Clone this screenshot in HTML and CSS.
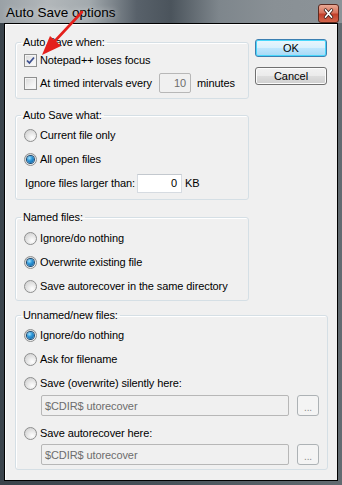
FILE: index.html
```html
<!DOCTYPE html>
<html lang="en">
<head>
    <meta charset="UTF-8">
    <title>Auto Save options</title>
    <link rel="stylesheet" href="styles.css">
</head>
<body>
    <div class="window">
        <div class="titlebar">
            <span class="title">Auto Save options</span>
            <span class="close">
                <svg width="19" height="17" viewBox="0 0 19 17">
                    <path d="M6.5 5 L12.5 12 M12.5 5 L6.5 12" stroke="#3a1d16" stroke-width="3.4" stroke-linecap="round"/>
                    <path d="M6.5 5 L12.5 12 M12.5 5 L6.5 12" stroke="#fff" stroke-width="1.8" stroke-linecap="round"/>
                </svg>
            </span>
        </div>

        <div class="client">
            <div class="top">
                <div class="groups">
                    <fieldset class="group g-when">
                        <legend>Auto Save when:</legend>
                        <div class="row">
                            <span class="check on">
                                <svg width="11" height="11" viewBox="0 0 11 11"><path d="M2 5.5 L4.4 8 L9 2.5" fill="none" stroke="#3c4f8f" stroke-width="1.8"/></svg>
                            </span>
                            <span>Notepad++ loses focus</span>
                        </div>
                        <div class="row">
                            <span class="check"></span>
                            <span class="label-every">At timed intervals every</span>
                            <span class="edit disabled num every-box">10</span>
                            <span class="unit">minutes</span>
                        </div>
                    </fieldset>

                    <fieldset class="group g-what">
                        <legend>Auto Save what:</legend>
                        <div class="row"><span class="radio"></span><span>Current file only</span></div>
                        <div class="row"><span class="radio on"></span><span>All open files</span></div>
                        <div class="row plain">
                            <span class="label-size">Ignore files larger than:</span>
                            <span class="edit num size-box">0</span>
                            <span class="unit">KB</span>
                        </div>
                    </fieldset>

                    <fieldset class="group g-named">
                        <legend>Named files:</legend>
                        <div class="row"><span class="radio"></span><span>Ignore/do nothing</span></div>
                        <div class="row"><span class="radio on"></span><span>Overwrite existing file</span></div>
                        <div class="row"><span class="radio"></span><span>Save autorecover in the same directory</span></div>
                    </fieldset>
                </div>

                <div class="buttons">
                    <button class="btn default">OK</button>
                    <button class="btn">Cancel</button>
                </div>
            </div>

            <fieldset class="group g-unnamed">
                <legend>Unnamed/new files:</legend>
                <div class="row"><span class="radio on"></span><span>Ignore/do nothing</span></div>
                <div class="row"><span class="radio"></span><span>Ask for filename</span></div>
                <div class="row"><span class="radio"></span><span>Save (overwrite) silently here:</span></div>
                <div class="path-row first">
                    <span class="edit disabled path">$CDIR$ utorecover</span>
                    <span class="browse">...</span>
                </div>
                <div class="row after-path"><span class="radio"></span><span>Save autorecover here:</span></div>
                <div class="path-row last">
                    <span class="edit disabled path">$CDIR$ utorecover</span>
                    <span class="browse">...</span>
                </div>
            </fieldset>
        </div>

        <!-- annotation arrow drawn over the dialog -->
        <svg class="arrow" width="90" height="60" viewBox="0 0 90 60">
            <path d="M82 12 L54 42" stroke="#e4201c" stroke-width="2.6" stroke-linecap="round"/>
            <path d="M42 55 L50 36 L61 46 Z" fill="#e4201c"/>
        </svg>
    </div>
</body>
</html>
```

FILE: styles.css
```css
body {
    margin: 0;
    width: 342px;
    height: 485px;
    overflow: hidden;
    font-family: "Liberation Sans", Arial, sans-serif;
    font-size: 11px;
    letter-spacing: -0.1px;
    color: #000;
}
.window {
    position: relative;
    width: 342px;
    height: 485px;
    display: flex;
    flex-direction: column;
    background: linear-gradient(90deg, #3a434b 0%, #48525a 50%, #626b71 100%);
}
.titlebar {
    height: 23px;
    display: flex;
    align-items: center;
    padding: 0 3px 0 6px;
    background: linear-gradient(90deg, #9aa1a6 0%, #b2b7ba 14%, #a3aaae 26%, #58616a 40%, #4b545c 50%, #7e868c 64%, #899095 80%, #8c9398 100%);
}
.title {
    flex: 1;
    font-size: 13.5px;
    letter-spacing: 0;
    padding-top: 2px;
    text-shadow: 0 0 6px rgba(255, 255, 255, 0.6);
}
.close {
    width: 19px;
    height: 17px;
    margin-top: 3px;
    border: 1px solid #5b2a20;
    border-radius: 3px;
    background: linear-gradient(180deg, #e9a995 0%, #d8735c 45%, #c2402a 55%, #d3654b 100%);
    display: flex;
}
.client {
    flex: 1;
    margin: 0 4px 4px 4px;
    border: 1px solid #000;
    box-shadow: inset 1px 1px 0 #fff;
    background: #f0f0f0;
    padding: 12px 0 0 10px;
}
.top {
    display: flex;
    gap: 6px;
}
.groups {
    width: 234px;
    display: flex;
    flex-direction: column;
}
.group {
    margin: 0;
    padding: 0 0 0 8px;
    border: 1px solid #d5dfe5;
    border-radius: 3px;
    box-shadow: inset 1px 1px 0 #fff;
    display: flex;
    flex-direction: column;
    gap: 4px;
}
.group legend {
    font-size: 11px;
    line-height: 13px;
    margin-left: -3px;
    padding: 0 2px;
}
.g-when {
    gap: 3px;
    padding-top: 1px;
    padding-bottom: 5px;
}
.g-what {
    margin-top: 10px;
    padding-top: 3px;
    padding-bottom: 6px;
}
.g-named {
    margin-top: 11px;
    padding-top: 4px;
    padding-bottom: 4px;
}
.g-unnamed {
    width: 313px;
    box-sizing: border-box;
    margin-top: 8px;
    padding-top: 3px;
    padding-bottom: 4px;
}
.row {
    height: 20px;
    display: flex;
    align-items: center;
    white-space: nowrap;
}
.row.plain {
    padding-left: 1px;
}
.check,
.radio {
    width: 13px;
    height: 13px;
    box-sizing: border-box;
    margin-right: 3px;
    flex: none;
    display: flex;
    align-items: center;
    justify-content: center;
}
.check {
    border: 1px solid #8e8f8f;
    background: linear-gradient(135deg, #d9d9d9 0%, #f2f2f2 60%, #fdfdfd 100%);
    box-shadow: inset 0 0 0 1px #f4f4f4;
}
.radio {
    border: 1px solid #8e8f8f;
    border-radius: 50%;
    background: radial-gradient(circle at 65% 70%, #ffffff 0%, #e6e6e6 45%, #c9c9c9 100%);
}
.radio.on::after {
    content: "";
    width: 7px;
    height: 7px;
    border-radius: 50%;
    background: radial-gradient(circle at 35% 30%, #9fe2ff 0%, #2d97d9 40%, #0c5796 100%);
    box-shadow: 0 0 0 1px #1b4a72;
}
.edit {
    box-sizing: border-box;
    border: 1px solid #d6dbe1;
    border-top-color: #c3c8ce;
    background: #fff;
    display: flex;
    align-items: center;
    padding: 0 4px;
}
.edit.disabled {
    background: #f0f0f0;
    border-color: #b7b7b7;
    border-radius: 2px;
    color: #6d6d6d;
}
.num {
    justify-content: flex-end;
}
.label-every {
    width: 119px;
}
.every-box {
    width: 32px;
    height: 20px;
}
.unit {
    margin-left: 6px;
}
.label-size {
    width: 112px;
}
.size-box {
    width: 45px;
    height: 19px;
}
.size-box + .unit {
    margin-left: 3px;
}
.path-row {
    display: flex;
    gap: 8px;
    padding-left: 17px;
}
.path-row.first {
    margin-top: -2px;
}
.path-row.last {
    margin-top: -3px;
}
.row.after-path {
    margin-top: 3px;
}
.path {
    width: 248px;
    height: 21px;
    padding: 0 3px;
}
.browse {
    width: 22px;
    height: 21px;
    box-sizing: border-box;
    border: 1px solid #adb2b5;
    border-radius: 3px;
    background: #f4f4f4;
    color: #8a8a8a;
    font-size: 10px;
    display: flex;
    align-items: center;
    justify-content: center;
    padding-top: 3px;
}
.buttons {
    display: flex;
    flex-direction: column;
    gap: 10px;
    padding-top: 3px;
}
.btn {
    width: 72px;
    height: 18px;
    font-family: "Liberation Sans", Arial, sans-serif;
    font-size: 11px;
    padding: 0;
    border: 1px solid #707070;
    border-radius: 3px;
    background: linear-gradient(180deg, #f2f2f2 0%, #ebebeb 48%, #dddddd 52%, #cfcfcf 100%);
    box-shadow: inset 0 0 0 1px #fcfcfc;
    color: #000;
}
.btn.default {
    border-color: #3c7fb1;
    background: linear-gradient(180deg, #eaf6fd 0%, #d9f0fc 48%, #bee6fd 52%, #a7d9f5 100%);
    box-shadow: inset 0 0 0 1px #48d7fb;
}
.arrow {
    position: absolute;
    left: 0;
    top: 0;
}
```
